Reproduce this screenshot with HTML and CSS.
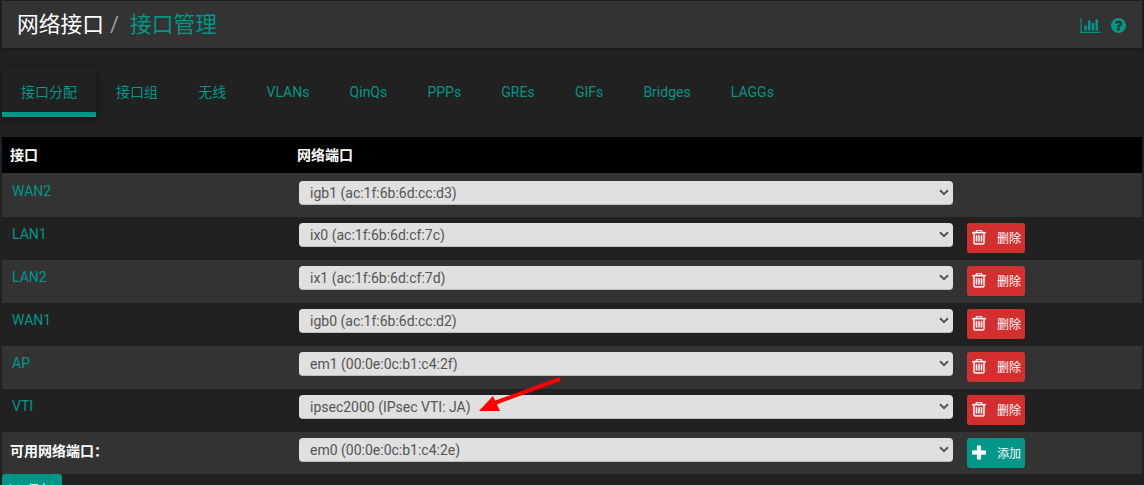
FILE: index.html
```html
<!DOCTYPE html>
<html>
	<head>
		<meta charset="UTF-8">
		<title>网络接口 / 接口管理</title>
		<link rel="stylesheet" href="styles.css">
	</head>
	<body>
		<header class="page-head">
			<h1 class="crumbs"><span>网络接口</span><i>/</i><a href="#">接口管理</a></h1>
			<div class="head-icons">
				<a href="#" class="chart-link"><svg viewBox="0 128 2048 1536"><path d="M640 896v512h-256v-512h256zm384-512v1024h-256v-1024h256zm1024 1152v128h-2048v-1536h128v1408h1920zm-640-896v768h-256v-768h256zm384-384v1152h-256v-1152h256z"/></svg></a>
				<a href="#" class="help-link"><svg viewBox="128 128 1536 1536"><path d="M1024 1376v-192q0-14-9-23t-23-9h-192q-14 0-23 9t-9 23v192q0 14 9 23t23 9h192q14 0 23-9t9-23zm256-672q0-88-55.5-163t-138.5-116-170-41q-243 0-371 213-15 24 8 42l132 100q7 6 19 6 16 0 25-12 53-68 86-92 34-24 86-24 48 0 85.5 26t37.5 59q0 38-20 61t-68 45q-63 28-115.5 86.5t-52.5 125.5v36q0 14 9 23t23 9h192q14 0 23-9t9-23q0-19 21.5-49.5t54.5-49.5q32-18 49-28.5t46-35 44.5-48 28-60.5 12.5-81zm384 192q0 209-103 385.5t-279.5 279.5-385.5 103-385.5-103-279.5-279.5-103-385.5 103-385.5 279.5-279.5 385.5-103 385.5 103 279.5 279.5 103 385.5z"/></svg></a>
			</div>
		</header>

		<ul class="tabs">
			<li class="active"><a href="#">接口分配</a></li>
			<li><a href="#">接口组</a></li>
			<li><a href="#">无线</a></li>
			<li><a href="#">VLANs</a></li>
			<li><a href="#">QinQs</a></li>
			<li><a href="#">PPPs</a></li>
			<li><a href="#">GREs</a></li>
			<li><a href="#">GIFs</a></li>
			<li><a href="#">Bridges</a></li>
			<li><a href="#">LAGGs</a></li>
		</ul>

		<div class="ports">
			<div class="row head">
				<div>接口</div>
				<div>网络端口</div>
			</div>
			<div class="row first">
				<a href="#">WAN2</a>
				<select class="port"><option>igb1 (ac:1f:6b:6d:cc:d3)</option></select>
			</div>
			<div class="row">
				<a href="#">LAN1</a>
				<select class="port"><option>ix0 (ac:1f:6b:6d:cf:7c)</option></select>
				<button class="btn del"><svg viewBox="0 128 1408 1536"><use href="#trash"/></svg>删除</button>
			</div>
			<div class="row">
				<a href="#">LAN2</a>
				<select class="port"><option>ix1 (ac:1f:6b:6d:cf:7d)</option></select>
				<button class="btn del"><svg viewBox="0 128 1408 1536"><use href="#trash"/></svg>删除</button>
			</div>
			<div class="row">
				<a href="#">WAN1</a>
				<select class="port"><option>igb0 (ac:1f:6b:6d:cc:d2)</option></select>
				<button class="btn del"><svg viewBox="0 128 1408 1536"><use href="#trash"/></svg>删除</button>
			</div>
			<div class="row">
				<a href="#">AP</a>
				<select class="port"><option>em1 (00:0e:0c:b1:c4:2f)</option></select>
				<button class="btn del"><svg viewBox="0 128 1408 1536"><use href="#trash"/></svg>删除</button>
			</div>
			<div class="row">
				<a href="#">VTI</a>
				<select class="port"><option>ipsec2000 (IPsec VTI: JA)</option></select>
				<button class="btn del"><svg viewBox="0 128 1408 1536"><use href="#trash"/></svg>删除</button>
			</div>
			<div class="row last">
				<b>可用网络端口：</b>
				<select class="port"><option>em0 (00:0e:0c:b1:c4:2e)</option></select>
				<button class="btn add"><svg viewBox="192 128 1408 1408"><use href="#plus"/></svg>添加</button>
			</div>
		</div>

		<button class="btn save"><svg viewBox="0 0 1536 1536"><path d="M384 1408h768v-384h-768v384zm896 0h128v-896l-192-192v416q0 40-28 68t-68 28h-576q-40 0-68-28t-28-68v-416h-128v1088h128v-416q0-40 28-68t68-28h832q40 0 68 28t28 68v416z"/></svg>保存</button>

		<!-- 红色箭头标注 -->
		<svg class="arrow" viewBox="0 0 1144 485">
			<path d="M560 379L492 404" stroke="#f00" stroke-width="4" fill="none"/>
			<path d="M479 411L493 396L500 411z" fill="#f00"/>
		</svg>

		<svg class="defs" width="0" height="0">
			<defs>
				<path id="trash" d="M512 688v576q0 14-9 23t-23 9h-64q-14 0-23-9t-9-23v-576q0-14 9-23t23-9h64q14 0 23 9t9 23zm256 0v576q0 14-9 23t-23 9h-64q-14 0-23-9t-9-23v-576q0-14 9-23t23-9h64q14 0 23 9t9 23zm256 0v576q0 14-9 23t-23 9h-64q-14 0-23-9t-9-23v-576q0-14 9-23t23-9h64q14 0 23 9t9 23zm128 724v-948h-896v948q0 22 7 40.5t14.5 27 10.5 8.5h832q3 0 10.5-8.5t14.5-27 7-40.5zm-672-1076h448l-48-117q-7-9-17-11h-317q-10 2-17 11zm928 32v64q0 14-9 23t-23 9h-96v948q0 83-47 143.5t-113 60.5h-832q-66 0-113-58.5t-47-141.5v-952h-96q-14 0-23-9t-9-23v-64q0-14 9-23t23-9h309l70-167q15-37 54-63t79-26h320q40 0 79 26t54 63l70 167h309q14 0 23 9t9 23z"/>
				<path id="plus" d="M1600 736v192q0 40-28 68t-68 28h-416v416q0 40-28 68t-68 28h-192q-40 0-68-28t-28-68v-416h-416q-40 0-68-28t-28-68v-192q0-40 28-68t68-28h416v-416q0-40 28-68t68-28h192q40 0 68 28t28 68v416h416q40 0 68 28t28 68z"/>
			</defs>
		</svg>
	</body>
</html>
```

FILE: styles.css
```css
*{
	margin:0;
	padding:0;
	box-sizing:border-box;
}
html,body{
	height:485px;
	overflow:hidden;
}
body{
	padding:1px 2px 0;
	background:#212121;
	color:#fff;
	font-family:Roboto,"Noto Sans CJK SC",sans-serif;
	font-size:14px;
}
a{
	color:#009688;
	text-decoration:none;
}

/* 页头 */
.page-head{
	display:flex;
	justify-content:space-between;
	align-items:center;
	height:47px;
	padding:0 16px 0 15px;
	background:#333;
	box-shadow:0 1px 3px rgba(0,0,0,0.4);
}
.crumbs{
	display:flex;
	align-items:center;
	font-size:21.75px;
	font-weight:400;
	line-height:46px;
}
.crumbs i{
	margin:0 11px 0 6px;
	color:#9e9e9e;
	font-style:normal;
}
.head-icons{
	display:flex;
	align-items:center;
	gap:10px;
	padding-top:1px;
}
.head-icons a{
	display:block;
	height:15px;
}
.head-icons svg{
	display:block;
	height:15px;
	fill:#009688;
}
.chart-link svg{width:21px;}
.help-link svg{width:15px;}

/* 选项卡 */
.tabs{
	display:flex;
	height:49px;
	margin-top:20px;
	list-style:none;
}
.tabs a{
	display:block;
	height:49px;
	padding:0 20.1px;
	line-height:49px;
	font-size:14px;
	white-space:nowrap;
}
.tabs .active{
	border-bottom:5px solid #009688;
	box-shadow:0 2px 8px rgba(0,0,0,0.45);
}
.tabs .active a{
	height:44px;
	padding:0 19px;
}

/* 端口表 */
.ports{
	margin-top:20px;
}
.row{
	display:grid;
	grid-template-columns:275px 654px 58px;
	column-gap:14px;
	align-items:start;
	height:43px;
	padding:6.5px 0 0 8px;
}
.row:nth-child(even){
	background:#333;
}
.row > a,.row > b{
	padding-top:1px;
	line-height:20px;
}
.row > a{
	padding-left:2px;
}
.row > b{
	font-weight:700;
	padding-top:3px;
}
.row.first{
	height:43.5px;
	padding-top:8px;
}
.row.first > a{
	padding-top:0;
}
.row.last{
	height:42.5px;
}
.row.head{
	height:36px;
	padding:0 0 0 8px;
	background:#000;
	font-weight:700;
	line-height:36px;
	grid-template-columns:287px 1fr;
	column-gap:0;
}
.port{
	appearance:none;
	width:654px;
	height:24px;
	padding:0 11px;
	border:none;
	border-bottom:1px solid #bdbdbd;
	border-radius:4px;
	background:#e0e0e0 url("data:image/svg+xml,%3Csvg xmlns='http://www.w3.org/2000/svg' viewBox='0 0 10 7'%3E%3Cpath d='M1 1.2l4 4 4-4' fill='none' stroke='%23555' stroke-width='2'/%3E%3C/svg%3E") no-repeat right 4px center/10px 7px;
	color:#555;
	font-family:Roboto,"Noto Sans CJK SC",sans-serif;
	font-size:14px;
}
.btn{
	display:flex;
	align-items:center;
	justify-content:space-between;
	width:58px;
	height:30px;
	padding:0 4px 1px 5px;
	border:none;
	border-radius:3px;
	color:#fff;
	font-family:Roboto,"Noto Sans CJK SC",sans-serif;
	font-size:12px;
}
.btn svg{
	width:14px;
	height:15px;
	fill:#fff;
	stroke:#fff;
	stroke-width:30;
}
.del{background:#d32f2f;}
.add{background:#009688;}
.save{
	width:60px;
	background:#009688;
	justify-content:flex-start;
	gap:6px;
}

/* 标注 */
.arrow{
	position:absolute;
	top:0;
	left:0;
	width:1144px;
	height:485px;
	pointer-events:none;
}
.defs{
	position:absolute;
}
```
